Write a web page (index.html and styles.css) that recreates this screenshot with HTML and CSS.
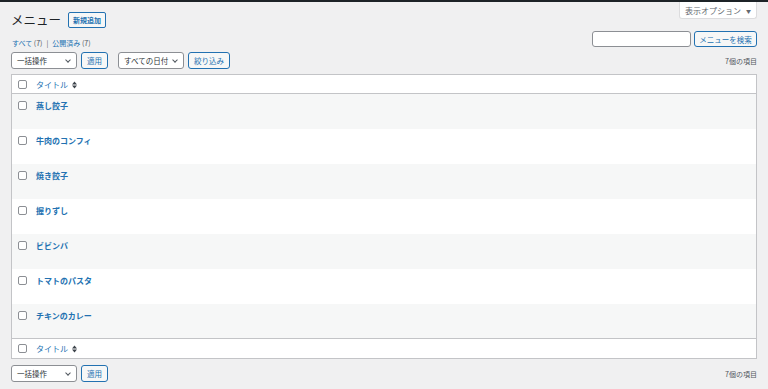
FILE: index.html
```html
<!DOCTYPE html>
<html lang="ja">

<head>
    <meta charset="UTF-8">
    <meta name="viewport" content="width=device-width, initial-scale=1.0">
    <title>メニュー</title>
    <link rel="stylesheet" href="styles.css">
</head>

<body>
    <div class="admin-bar"></div>

    <div class="screen-meta">
        <button class="screen-options">表示オプション <span class="caret">▼</span></button>
    </div>

    <div class="wrap">
        <div class="page-head">
            <h1>メニュー</h1>
            <a class="add-new" href="#">新規追加</a>
        </div>

        <div class="filter-bar">
            <ul class="views">
                <li><a href="#">すべて <span class="count">(7)</span></a></li>
                <li class="sep">|</li>
                <li><a href="#">公開済み <span class="count">(7)</span></a></li>
            </ul>
            <div class="search-box">
                <input type="search" class="search-input">
                <button class="btn">メニューを検索</button>
            </div>
        </div>

        <div class="tablenav">
            <div class="actions">
                <div class="select wide">一括操作</div>
                <button class="btn">適用</button>
                <div class="select date">すべての日付</div>
                <button class="btn">絞り込み</button>
            </div>
            <span class="num-items">7個の項目</span>
        </div>

        <table class="list-table">
            <thead>
                <tr>
                    <th class="check-col"><span class="checkbox"></span></th>
                    <th class="title-col">
                        <a href="#">タイトル</a>
                        <svg class="sort" width="5" height="8" viewBox="0 0 5 8">
                            <path d="M0 3.4 L2.5 0.4 L5 3.4 Z M0 4.6 L2.5 7.6 L5 4.6 Z" fill="#3c434a" />
                        </svg>
                    </th>
                </tr>
            </thead>
            <tbody id="rows"></tbody>
            <tfoot>
                <tr>
                    <th class="check-col"><span class="checkbox"></span></th>
                    <th class="title-col">
                        <a href="#">タイトル</a>
                        <svg class="sort" width="5" height="8" viewBox="0 0 5 8">
                            <path d="M0 3.4 L2.5 0.4 L5 3.4 Z M0 4.6 L2.5 7.6 L5 4.6 Z" fill="#3c434a" />
                        </svg>
                    </th>
                </tr>
            </tfoot>
        </table>

        <div class="tablenav bottom">
            <div class="actions">
                <div class="select wide">一括操作</div>
                <button class="btn">適用</button>
            </div>
            <span class="num-items">7個の項目</span>
        </div>
    </div>

    <script>
        const menuItems = [
            '蒸し餃子',
            '牛肉のコンフィ',
            '焼き餃子',
            '握りずし',
            'ビビンバ',
            'トマトのパスタ',
            'チキンのカレー'
        ];

        const rows = document.getElementById('rows');
        menuItems.forEach(name => {
            const tr = document.createElement('tr');
            tr.innerHTML = `
                <td class="check-col"><span class="checkbox"></span></td>
                <td class="title-col"><a class="row-title" href="#">${name}</a></td>
            `;
            rows.appendChild(tr);
        });
    </script>
</body>

</html>
```

FILE: styles.css
```css
body {
    font-family: "Noto Sans CJK JP", "Noto Sans", sans-serif;
    background-color: #f0f0f1;
    color: #3c434a;
    margin: 0;
    padding: 0;
    font-size: 8px;
}

a {
    color: #2271b1;
    text-decoration: none;
}

.admin-bar {
    height: 2px;
    background-color: #1d2327;
}

.screen-meta {
    float: right;
    margin-right: 11px;
}

.screen-options {
    width: 78px;
    height: 17px;
    padding: 0;
    border: 1px solid #dcdcde;
    border-top: none;
    border-radius: 0 0 3px 3px;
    background-color: #fff;
    color: #646970;
    font-family: inherit;
    font-size: 8px;
    line-height: 15px;
}

.screen-options .caret {
    font-size: 5px;
    margin-left: 3px;
    vertical-align: 1px;
}

.wrap {
    padding: 0 11px;
}

.page-head {
    display: flex;
    align-items: center;
    gap: 7px;
    padding-top: 10px;
    height: 16px;
}

h1 {
    margin: 0;
    font-size: 12.5px;
    font-weight: 400;
    color: #1d2327;
    line-height: 16px;
}

.add-new {
    display: inline-block;
    height: 14px;
    padding: 0 4px;
    border: 1px solid #2271b1;
    border-radius: 2px;
    background-color: #f6f7f7;
    font-size: 7px;
    font-weight: 600;
    line-height: 14px;
}

.filter-bar {
    display: flex;
    justify-content: space-between;
    align-items: flex-end;
    margin-top: 3px;
}

.views {
    display: flex;
    gap: 4px;
    margin: 0 0 -2px 1px;
    padding: 0;
    list-style: none;
    font-size: 7px;
    line-height: 12px;
    color: #50575e;
}

.views .count {
    color: #50575e;
}

.search-box {
    display: flex;
    gap: 3px;
}

.search-input {
    box-sizing: border-box;
    width: 99px;
    height: 16px;
    margin: 0;
    border: 1px solid #8c8f94;
    border-radius: 3px;
    background-color: #fff;
}

.btn {
    box-sizing: border-box;
    height: 17px;
    padding: 0 5px;
    border: 1px solid #2271b1;
    border-radius: 3px;
    background-color: #f6f7f7;
    color: #2271b1;
    font-family: inherit;
    font-size: 7.5px;
    line-height: 15px;
    cursor: pointer;
}

.search-box .btn {
    height: 16px;
    width: 63px;
    padding: 0;
}

.tablenav {
    display: flex;
    justify-content: space-between;
    align-items: center;
    height: 17px;
    margin: 5px 0;
}

.tablenav.bottom {
    margin-top: 6px;
}

.actions {
    display: flex;
    align-items: center;
    gap: 4px;
}

.select {
    box-sizing: border-box;
    height: 17px;
    padding: 0 14px 0 5px;
    border: 1px solid #8c8f94;
    border-radius: 3px;
    background-color: #fff;
    color: #2c3338;
    font-size: 7.5px;
    line-height: 15px;
    position: relative;
}

.select::after {
    content: "";
    position: absolute;
    right: 6px;
    top: 5px;
    width: 3px;
    height: 3px;
    border-right: 1px solid #50575e;
    border-bottom: 1px solid #50575e;
    transform: rotate(45deg);
}

.select.wide {
    width: 66px;
}

.select.date {
    width: 66px;
    margin-left: 6px;
}

.num-items {
    font-size: 7px;
    color: #50575e;
}

.list-table {
    width: 100%;
    border-collapse: collapse;
    border: 1px solid #c3c4c7;
    background-color: #fff;
}

.list-table th,
.list-table td {
    padding: 0;
    text-align: left;
    font-weight: 400;
}

.list-table thead tr {
    height: 19px;
    border-bottom: 1px solid #c3c4c7;
}

.list-table tfoot tr {
    height: 20px;
    border-top: 1px solid #c3c4c7;
}

.list-table tbody tr {
    height: 35px;
}

.list-table tbody tr:nth-child(odd) {
    background-color: #f6f7f7;
}

.list-table tbody td {
    vertical-align: top;
    padding-top: 6px;
}

.check-col {
    width: 24px;
}

.checkbox {
    display: block;
    box-sizing: border-box;
    width: 9px;
    height: 9px;
    margin-left: 6px;
    border: 1px solid #8c8f94;
    border-radius: 2px;
    background-color: #fff;
}

.list-table tbody .checkbox {
    margin-top: 1px;
}

.title-col a {
    font-size: 8px;
    line-height: 11px;
}

.sort {
    margin-left: 2px;
    vertical-align: -1px;
}

.row-title {
    font-weight: 700;
}
```
